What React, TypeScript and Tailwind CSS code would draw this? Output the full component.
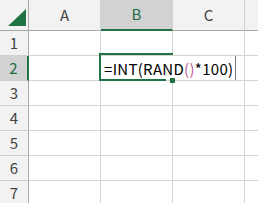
import React from "react";

const FONT = { fontFamily: '"Noto Sans CJK JP", "Noto Sans", sans-serif' };

function ColHeader({ label, selected }: { label: string; selected?: boolean }) {
  return (
    <div
      className={
        "w-[72px] shrink-0 flex items-center justify-center border-r border-r-[#d0d0d0] text-[15px] " +
        (selected
          ? "bg-[#d2d2d2] text-[#1e6b41] border-b-2 border-b-[#217346]"
          : "bg-[#f2f2f2] text-[#444444] border-b border-b-[#a8a8a8]")
      }
    >
      {label}
    </div>
  );
}

function Row({ n, selected }: { n: number; selected?: boolean }) {
  return (
    <div className="flex h-[25px]">
      <div
        className={
          "w-[29px] shrink-0 flex items-center justify-center border-b border-b-[#d0d0d0] text-[15px] " +
          (selected
            ? "bg-[#d2d2d2] text-[#1e6b41] border-r-2 border-r-[#217346]"
            : "bg-[#f2f2f2] text-[#444444] border-r border-r-[#a8a8a8]")
        }
      >
        {n}
      </div>
      <div className="w-[72px] shrink-0 border-r border-b border-[#d4d4d4]" />
      <div className="w-[72px] shrink-0 border-r border-b border-[#d4d4d4]" />
      <div className="w-[72px] shrink-0 border-r border-b border-[#d4d4d4]" />
      <div className="flex-1 border-b border-[#d4d4d4]" />
    </div>
  );
}

export default function App() {
  return (
    <div className="relative w-[258px] h-[203px] overflow-hidden bg-white" style={FONT}>
      <div className="flex h-[31px]">
        <div className="w-[29px] shrink-0 bg-[#f2f2f2] border-r border-b border-[#a8a8a8] relative">
          <svg className="absolute left-0 top-0" width="28" height="30" viewBox="0 0 28 30">
            <polygon points="8,26 26,26 26,9" fill="#217346" />
          </svg>
        </div>
        <ColHeader label="A" />
        <ColHeader label="B" selected />
        <ColHeader label="C" />
        <div className="flex-1 bg-[#f2f2f2] border-b border-[#a8a8a8]" />
      </div>
      {[1, 2, 3, 4, 5, 6, 7].map((n) => (
        <Row key={n} n={n} selected={n === 2} />
      ))}

      {/* edit text overlay */}
      <div className="absolute left-[101px] top-[56px] w-[135px] h-[24px] bg-white border-r border-r-[#7a7a7a] flex items-center pl-[3px] text-[15px] tracking-[0.3px] text-black whitespace-nowrap leading-none">
        =INT(RAND<span className="text-[#c0609a]">()</span>*100)
      </div>

      {/* selection border */}
      <div className="absolute left-[99px] top-[53px] w-[74px] h-[2px] bg-[#217346]" />
      <div className="absolute left-[99px] top-[53px] w-[2px] h-[28px] bg-[#217346]" />
      <div className="absolute left-[99px] top-[79px] w-[67px] h-[2px] bg-[#217346]" />
      <div className="absolute left-[170px] top-[78px] w-[5px] h-[5px] bg-[#217346]" />
    </div>
  );
}
